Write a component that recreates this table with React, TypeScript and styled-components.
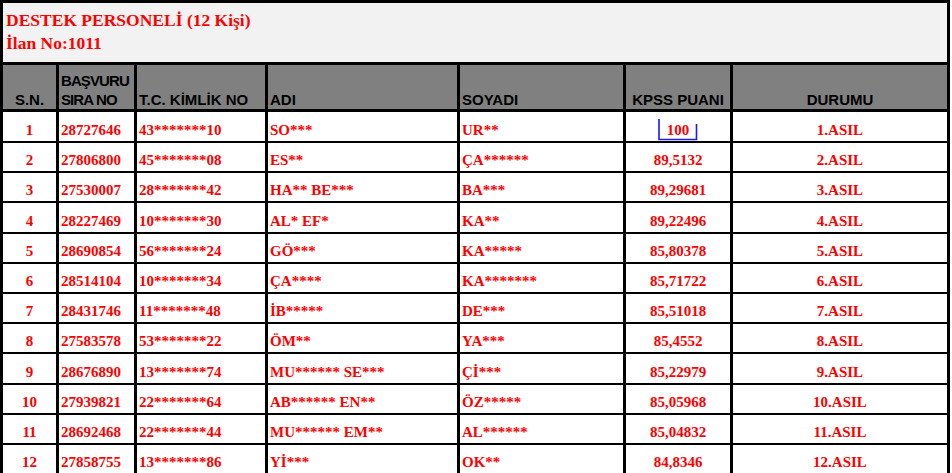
import React from "react";
import styled, { createGlobalStyle } from "styled-components";

const GlobalStyle = createGlobalStyle`
  html, body { margin: 0; padding: 0; background: #ffffff; }
  body { font-family: "Liberation Serif", "Times New Roman", serif; }
`;

const COLS = "53px 75px 128px 189px 163px 104px 214px";

const Sheet = styled.div`
  width: 944px;
  border: 3px solid #000;
  background: #000;
  display: flex;
  flex-direction: column;
`;

const Title = styled.div`
  height: 59px;
  box-sizing: border-box;
  padding: 6px 3px 0;
  background: #f2f2f2;
  color: #ff0000;
  font-family: "Liberation Serif", "Times New Roman", serif;
  font-weight: bold;
  font-size: 17.5px;
  line-height: 22.5px;
`;

const HeaderRow = styled.div`
  display: grid;
  grid-template-columns: ${COLS};
  column-gap: 3px;
  height: 44px;
  margin: 3px 0;
`;

const HeaderCell = styled.div<{ $align?: string; $tight?: boolean }>`
  background: #808080;
  color: #000;
  font-family: "Liberation Sans", Arial, sans-serif;
  font-weight: bold;
  font-size: 15px;
  line-height: 19px;
  letter-spacing: ${(p) => (p.$tight ? "-0.9px" : "0")};
  display: flex;
  flex-direction: column;
  justify-content: flex-end;
  align-items: ${(p) => p.$align ?? "flex-start"};
  text-align: ${(p) => (p.$align === "center" ? "center" : "left")};
  padding: 0 2px;
  white-space: nowrap;
  overflow: hidden;
`;

const Body = styled.div`
  display: flex;
  flex-direction: column;
  row-gap: 2px;
`;

const Row = styled.div`
  display: grid;
  grid-template-columns: ${COLS};
  column-gap: 3px;
`;

const Cell = styled.div<{ $center?: boolean }>`
  background: #fff;
  color: #ff0000;
  font-family: "Liberation Serif", "Times New Roman", serif;
  font-weight: bold;
  font-size: 15px;
  line-height: 17px;
  display: flex;
  align-items: flex-end;
  justify-content: ${(p) => (p.$center ? "center" : "flex-start")};
  padding: 0 2px 2px;
  white-space: nowrap;
`;

const Marked = styled.span`
  position: relative;
  display: inline-block;
`;

const Bracket = styled.svg`
  position: absolute;
  left: -9px;
  bottom: -2px;
  width: 40px;
  height: 23px;
  overflow: visible;
`;

type R = [string, string, string, string, string, string, string];

const rows: R[] = [
  ["1", "28727646", "43*******10", "SO***", "UR**", "100", "1.ASIL"],
  ["2", "27806800", "45*******08", "ES**", "ÇA******", "89,5132", "2.ASIL"],
  ["3", "27530007", "28*******42", "HA** BE***", "BA***", "89,29681", "3.ASIL"],
  ["4", "28227469", "10*******30", "AL* EF*", "KA**", "89,22496", "4.ASIL"],
  ["5", "28690854", "56*******24", "GÖ***", "KA*****", "85,80378", "5.ASIL"],
  ["6", "28514104", "10*******34", "ÇA****", "KA*******", "85,71722", "6.ASIL"],
  ["7", "28431746", "11*******48", "İB*****", "DE***", "85,51018", "7.ASIL"],
  ["8", "27583578", "53*******22", "ÖM**", "YA***", "85,4552", "8.ASIL"],
  ["9", "28676890", "13*******74", "MU****** SE***", "Çİ***", "85,22979", "9.ASIL"],
  ["10", "27939821", "22*******64", "AB****** EN**", "ÖZ*****", "85,05968", "10.ASIL"],
  ["11", "28692468", "22*******44", "MU****** EM**", "AL******", "85,04832", "11.ASIL"],
  ["12", "27858755", "13*******86", "Yİ***", "OK**", "84,8346", "12.ASIL"],
];

// Row heights follow the sheet's fractional row pitch (~30.2px incl. 2px rule)
const rowHeight = (i: number) => {
  if (i === 0) return 29;
  const top = (k: number) => Math.round(143 + 30.2 * (k - 1));
  return top(i + 1) - top(i) - 2;
};

export default function App() {
  return (
    <>
      <GlobalStyle />
      <Sheet>
        <Title>
          <div>DESTEK PERSONELİ (12 Kişi)</div>
          <div>İlan No:1011</div>
        </Title>
        <HeaderRow>
          <HeaderCell $align="center">S.N.</HeaderCell>
          <HeaderCell $tight>
            <span>BAŞVURU</span>
            <span>SIRA NO</span>
          </HeaderCell>
          <HeaderCell>T.C. KİMLİK NO</HeaderCell>
          <HeaderCell>ADI</HeaderCell>
          <HeaderCell>SOYADI</HeaderCell>
          <HeaderCell $align="center">KPSS PUANI</HeaderCell>
          <HeaderCell $align="center">DURUMU</HeaderCell>
        </HeaderRow>
        <Body>
          {rows.map((r, i) => (
            <Row key={r[0]} style={{ height: rowHeight(i) }}>
              <Cell $center>{r[0]}</Cell>
              <Cell>{r[1]}</Cell>
              <Cell>{r[2]}</Cell>
              <Cell>{r[3]}</Cell>
              <Cell>{r[4]}</Cell>
              <Cell $center>
                {i === 0 ? (
                  <Marked>
                    {r[5]}
                    <Bracket viewBox="0 0 40 23">
                      <path
                        d="M1 1 V21.5 H38.5 V6"
                        fill="none"
                        stroke="#1a1aff"
                        strokeWidth="1.6"
                      />
                    </Bracket>
                  </Marked>
                ) : (
                  r[5]
                )}
              </Cell>
              <Cell $center>{r[6]}</Cell>
            </Row>
          ))}
        </Body>
      </Sheet>
    </>
  );
}
